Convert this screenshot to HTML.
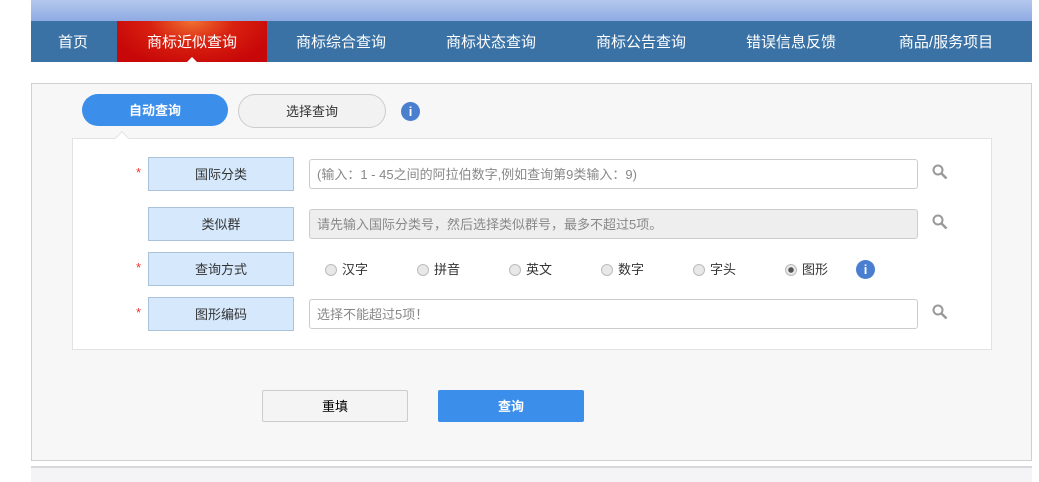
<!DOCTYPE html>
<html><head><meta charset="utf-8"><style>
*{margin:0;padding:0;box-sizing:border-box}
body{width:1039px;height:482px;background:#fff;font-family:"Liberation Sans","Noto Sans CJK SC",sans-serif;position:relative;overflow:hidden;font-size:13px;color:#333}
.abs{position:absolute}
.top{left:31px;top:0;width:1001px;height:21px;background:linear-gradient(#b4c8ee,#8fabe2)}
.nav{left:31px;top:21px;width:1001px;height:41px;background:#3a72a5}
.nav span{position:absolute;top:1px;height:41px;line-height:41px;color:#fff;font-size:15px;text-align:center}
.red{top:0!important;background:radial-gradient(ellipse at 50% 0%,#f07030 0%,#d82010 40%,#c80808 80%)}
.panel{left:31px;top:83px;width:1001px;height:378px;background:#f7f7f7;border:1px solid #d0d0d0}
.inner{left:72px;top:138px;width:920px;height:212px;background:#fff;border:1px solid #e2e2e2}
.lab{left:148px;width:146px;height:34px;background:#d6e9fc;border:1px solid #abc3da;text-align:center;line-height:34px;font-size:13px;color:#333}
.star{left:136px;color:#e33;font-size:13px}
.inp{left:309px;width:609px;height:30px;border:1px solid #ccc;border-radius:3px;background:#fff;line-height:29px;padding-left:7px;color:#888;font-size:13px}
.rad{top:262px;font-size:13px;color:#333;line-height:16px}
.rad i{display:inline-block;width:12px;height:12px;border-radius:50%;border:1px solid #bbb;background:#e8e8e8;vertical-align:-2px;margin-right:5px;position:relative}
.info{width:19px;height:19px;border-radius:50%;background:#4a7fd0;color:#fff;font-weight:bold;text-align:center;line-height:19px;font-size:13px;font-family:"Liberation Sans",sans-serif}
</style></head><body>
<div class="abs top"></div>
<div class="abs nav">
<span style="left:14px;width:56px">首页</span>
<span class="red" style="left:86px;width:150px;line-height:43px">商标近似查询</span>
<span style="left:250px;width:120px">商标综合查询</span>
<span style="left:400px;width:120px">商标状态查询</span>
<span style="left:550px;width:120px">商标公告查询</span>
<span style="left:700px;width:120px">错误信息反馈</span>
<span style="left:850px;width:130px">商品/服务项目</span>
</div>
<div class="abs" style="left:187px;top:57px;width:0;height:0;border-left:5px solid transparent;border-right:5px solid transparent;border-bottom:5px solid #fff"></div>
<div class="abs panel"></div>
<div class="abs" style="left:82px;top:94px;width:146px;height:32px;border-radius:16px;background:#3b8eea;color:#fff;font-weight:bold;text-align:center;line-height:33px;font-size:13px">自动查询</div>
<div class="abs" style="left:238px;top:94px;width:148px;height:34px;border-radius:17px;background:#f2f2f2;border:1px solid #ccc;text-align:center;line-height:33px;font-size:13px">选择查询</div>
<div class="abs info" style="left:401px;top:102px">i</div>
<div class="abs inner"></div>
<div class="abs" style="left:117px;top:133px;width:10px;height:10px;background:#fff;border-left:1px solid #e2e2e2;border-top:1px solid #e2e2e2;transform:rotate(45deg)"></div>
<span class="abs star" style="top:165px">*</span>
<div class="abs lab" style="top:157px">国际分类</div>
<div class="abs inp" style="top:159px">(输入：1 - 45之间的阿拉伯数字,例如查询第9类输入：9)</div>
<div class="abs lab" style="top:207px">类似群</div>
<div class="abs inp" style="top:209px;background:#eee">请先输入国际分类号，然后选择类似群号，最多不超过5项。</div>
<span class="abs star" style="top:260px">*</span>
<div class="abs lab" style="top:252px">查询方式</div>
<span class="abs rad" style="left:325px"><i></i>汉字</span>
<span class="abs rad" style="left:417px"><i></i>拼音</span>
<span class="abs rad" style="left:509px"><i></i>英文</span>
<span class="abs rad" style="left:601px"><i></i>数字</span>
<span class="abs rad" style="left:693px"><i></i>字头</span>
<span class="abs rad" style="left:785px"><i style="background:radial-gradient(circle,#555 0,#555 2.5px,#e8e8e8 3px)"></i>图形</span>
<div class="abs info" style="left:856px;top:260px">i</div>
<span class="abs star" style="top:305px">*</span>
<div class="abs lab" style="top:297px">图形编码</div>
<div class="abs inp" style="top:299px">选择不能超过5项！</div>
<svg class="abs" style="left:932px;top:164px" width="20" height="170" viewBox="0 0 20 170">
<g fill="none" stroke="#999" stroke-width="2">
<circle cx="6" cy="6" r="4.5"/><path d="M9.5 9.5l5 5" stroke-width="2.5"/>
<circle cx="6" cy="56" r="4.5"/><path d="M9.5 59.5l5 5" stroke-width="2.5"/>
<circle cx="6" cy="146" r="4.5"/><path d="M9.5 149.5l5 5" stroke-width="2.5"/>
</g></svg>
<div class="abs" style="left:262px;top:390px;width:146px;height:32px;border:1px solid #ccc;border-radius:2px;background:#f4f4f4;text-align:center;line-height:32px;font-size:13px;color:#000">重填</div>
<div class="abs" style="left:438px;top:390px;width:146px;height:32px;border-radius:2px;background:#3c8eeb;text-align:center;line-height:33px;font-size:13px;color:#fff;font-weight:bold">查询</div>
<div class="abs" style="left:31px;top:466px;width:1001px;height:16px;background:#f4f4f6;border-top:2px solid #d8d8dc"></div>
</body></html>
